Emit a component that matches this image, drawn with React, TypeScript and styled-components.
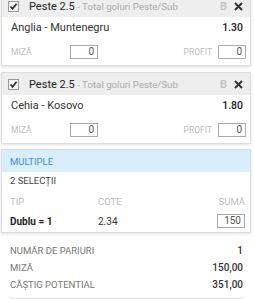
import React from "react";
import styled, { createGlobalStyle } from "styled-components";

const Global = createGlobalStyle`
  html, body { margin: 0; padding: 0; background: #fff; }
  body { font-family: Roboto, "Liberation Sans", sans-serif; }
  * { box-sizing: border-box; }
`;

const Page = styled.div`
  width: 254px;
  height: 299px;
  overflow: hidden;
  padding: 0 3px 0 1px;
`;

const Scroll = styled.div`
  margin-top: -6px;
  display: flex;
  flex-direction: column;
`;

const Card = styled.div<{ $gap: number }>`
  background: #fff;
  border: 1px solid #dedede;
  box-shadow: 0 1px 3px rgba(0, 0, 0, 0.13);
  margin-bottom: ${(p) => p.$gap}px;
`;

const Header = styled.div`
  height: 22px;
  background: #eeeeee;
  display: flex;
  align-items: center;
  padding: 0 7px 0 6px;
  font-size: 11px;
  color: #222;
  white-space: nowrap;
`;

const Check = styled.span`
  width: 11px;
  height: 11px;
  margin-right: 10px;
  display: flex;
`;

const Title = styled.span`
  flex: 1;
`;

const Market = styled.span`
  color: #aaa;
  font-size: 9.7px;
`;

const BIcon = styled.span`
  color: #c4c4c4;
  font-weight: 700;
  font-size: 11px;
  margin-right: 7px;
`;

const Close = styled.span`
  display: flex;
  width: 9px;
  height: 9px;
`;

const MatchRow = styled.div`
  height: 21px;
  display: flex;
  align-items: center;
  justify-content: space-between;
  padding: 0 7px 0 9px;
  font-size: 11px;
  color: #333;
`;

const Odd = styled.span`
  font-weight: 500;
  font-size: 10.5px;
  color: #222;
`;

const StakeRow = styled.div`
  height: 27px;
  display: flex;
  align-items: center;
  padding: 0 4px 0 9px;
`;

const Label = styled.span<{ $w?: number }>`
  font-size: 8.5px;
  color: #bdbdbd;
  text-transform: uppercase;
  width: ${(p) => (p.$w ? p.$w + "px" : "auto")};
`;

const Spacer = styled.div`
  flex: 1;
`;

const Input = styled.div`
  width: 28px;
  height: 14px;
  border: 1px solid #a9a9a9;
  font-size: 10px;
  color: #555;
  text-align: right;
  padding-right: 3px;
  line-height: 12px;
  margin-left: 6px;
`;

const MultiHeader = styled.div`
  height: 22px;
  background: #d9eefb;
  display: flex;
  align-items: center;
  padding-left: 8px;
  font-size: 9.5px;
  color: #3c8dcb;
`;

const Sel = styled.div`
  height: 16px;
  display: flex;
  align-items: center;
  padding: 1px 0 0 8px;
  font-size: 9.5px;
  color: #444;
`;

const Grid = styled.div<{ $h: number; $end?: boolean }>`
  display: grid;
  grid-template-columns: 88px 1fr auto;
  align-items: ${(p) => (p.$end ? "end" : "center")};
  height: ${(p) => p.$h}px;
  padding: 0 5px ${(p) => (p.$end ? 2 : 0)}px 8px;
`;

const ColHead = styled.span<{ $right?: boolean }>`
  font-size: 9.5px;
  line-height: 12px;
  color: #bdbdbd;
  text-align: ${(p) => (p.$right ? "right" : "left")};
`;

const TypeName = styled.span`
  font-size: 10px;
  font-weight: 700;
  color: #222;
`;

const Cote = styled.span`
  font-size: 10px;
  color: #333;
`;

const Summary = styled.div`
  margin: 0 8px 0 9px;
  padding-bottom: 5px;
  border-bottom: 1px solid #dcdcdc;
`;

const SumRow = styled.div`
  height: 17px;
  display: flex;
  align-items: center;
  justify-content: space-between;
`;

const SumLabel = styled.span`
  font-size: 9.5px;
  color: #777;
`;

const SumValue = styled.span`
  font-size: 10px;
  font-weight: 500;
  color: #333;
`;

const CheckIcon = () => (
  <svg width="11" height="11" viewBox="0 0 11 11">
    <rect x="0.5" y="0.5" width="10" height="10" fill="#f4f4f4" stroke="#9a9a9a" />
    <path d="M2.5 5.5 L4.5 7.8 L8.6 2.8" fill="none" stroke="#333" strokeWidth="1.8" />
  </svg>
);

const CloseIcon = () => (
  <svg width="9" height="9" viewBox="0 0 9 9">
    <path d="M1 1 L8 8 M8 1 L1 8" stroke="#333" strokeWidth="2" />
  </svg>
);

type Selection = { match: string; odd: string };

const BetCard = ({ s, gap }: { s: Selection; gap: number }) => (
  <Card $gap={gap}>
    <Header>
      <Check>
        <CheckIcon />
      </Check>
      <Title>
        Peste 2.5<Market> - Total goluri Peste/Sub</Market>
      </Title>
      <BIcon>B</BIcon>
      <Close>
        <CloseIcon />
      </Close>
    </Header>
    <MatchRow>
      <span>{s.match}</span>
      <Odd>{s.odd}</Odd>
    </MatchRow>
    <StakeRow>
      <Label $w={53}>Miză</Label>
      <Input>0</Input>
      <Spacer />
      <Label>Profit</Label>
      <Input>0</Input>
    </StakeRow>
  </Card>
);

const selections: Selection[] = [
  { match: "Anglia - Muntenegru", odd: "1.30" },
  { match: "Cehia - Kosovo", odd: "1.80" },
];

export default function App() {
  return (
    <>
      <Global />
      <Page>
        <Scroll>
          {selections.map((s, i) => (
            <BetCard key={s.match} s={s} gap={i === 0 ? 6 : 5} />
          ))}
          <Card $gap={9}>
            <MultiHeader>MULTIPLE</MultiHeader>
            <Sel>2 SELECȚII</Sel>
            <Grid $h={22} $end>
              <ColHead>TIP</ColHead>
              <ColHead>COTE</ColHead>
              <ColHead $right>SUMĂ</ColHead>
            </Grid>
            <Grid $h={22}>
              <TypeName>Dublu = 1</TypeName>
              <Cote>2.34</Cote>
              <Input>150</Input>
            </Grid>
          </Card>
          <Summary>
            <SumRow>
              <SumLabel>NUMĂR DE PARIURI</SumLabel>
              <SumValue>1</SumValue>
            </SumRow>
            <SumRow>
              <SumLabel>MIZĂ</SumLabel>
              <SumValue>150,00</SumValue>
            </SumRow>
            <SumRow>
              <SumLabel>CÂȘTIG POTENTIAL</SumLabel>
              <SumValue>351,00</SumValue>
            </SumRow>
          </Summary>
        </Scroll>
      </Page>
    </>
  );
}
